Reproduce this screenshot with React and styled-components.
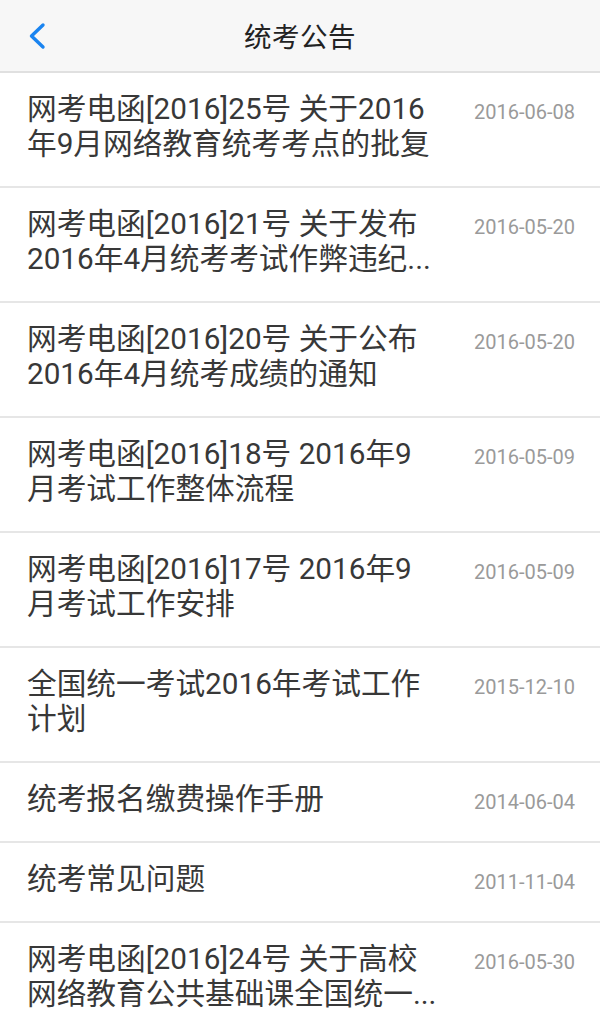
import React from 'react';
import styled, { createGlobalStyle } from 'styled-components';

const GlobalStyle = createGlobalStyle`
    html, body {
        margin: 0;
        padding: 0;
        background: #ffffff;
    }
    body {
        font-family: Roboto, "Noto Sans CJK SC", sans-serif;
    }
`;

const Page = styled.div`
    width: 600px;
    min-height: 1025px;
    background: #ffffff;
    overflow: hidden;
`;

const Header = styled.header`
    position: relative;
    height: 71px;
    display: flex;
    align-items: center;
    justify-content: center;
    background: #f7f7f7;
    border-bottom: 2px solid #e0e0e0;
`;

const BackButton = styled.button`
    position: absolute;
    left: 22px;
    top: 18px;
    width: 30px;
    height: 36px;
    padding: 0;
    border: none;
    background: transparent;
    display: flex;
    align-items: center;
    justify-content: center;
`;

const HeaderTitle = styled.h1`
    margin: 0 0 2px;
    font-size: 27.5px;
    font-weight: 400;
    color: #222222;
    letter-spacing: 0.5px;
`;

const List = styled.ul`
    list-style: none;
    margin: 0;
    padding: 0;
`;

const Row = styled.li`
    display: flex;
    justify-content: space-between;
    align-items: flex-start;
    padding: 18px 25px 25px 27px;
    border-bottom: 2px solid #e6e6e6;
    background: #ffffff;
`;

const Title = styled.div`
    width: 412px;
    font-size: 29.7px;
    line-height: 35px;
    color: #383838;
`;

const Date = styled.span`
    margin-top: 9px;
    font-size: 20px;
    line-height: 24px;
    color: #9a9a9a;
    white-space: nowrap;
`;

const notices = [
    { title: '网考电函[2016]25号 关于2016年9月网络教育统考考点的批复', date: '2016-06-08' },
    { title: '网考电函[2016]21号 关于发布2016年4月统考考试作弊违纪...', date: '2016-05-20' },
    { title: '网考电函[2016]20号 关于公布2016年4月统考成绩的通知', date: '2016-05-20' },
    { title: '网考电函[2016]18号 2016年9月考试工作整体流程', date: '2016-05-09' },
    { title: '网考电函[2016]17号 2016年9月考试工作安排', date: '2016-05-09' },
    { title: '全国统一考试2016年考试工作计划', date: '2015-12-10' },
    { title: '统考报名缴费操作手册', date: '2014-06-04' },
    { title: '统考常见问题', date: '2011-11-04' },
    { title: '网考电函[2016]24号 关于高校网络教育公共基础课全国统一...', date: '2016-05-30' },
];

const App = () => (
    <Page>
        <GlobalStyle />
        <Header>
            <BackButton aria-label="返回">
                <svg width="20" height="28" viewBox="0 0 20 28">
                    <polyline
                        points="16,3 4.5,14 16,25"
                        fill="none"
                        stroke="#1a84f0"
                        strokeWidth="3.4"
                        strokeLinecap="round"
                        strokeLinejoin="round"
                    />
                </svg>
            </BackButton>
            <HeaderTitle>统考公告</HeaderTitle>
        </Header>
        <List>
            {notices.map((n, i) => (
                <Row key={i}>
                    <Title>{n.title}</Title>
                    <Date>{n.date}</Date>
                </Row>
            ))}
        </List>
    </Page>
);

export default App;
